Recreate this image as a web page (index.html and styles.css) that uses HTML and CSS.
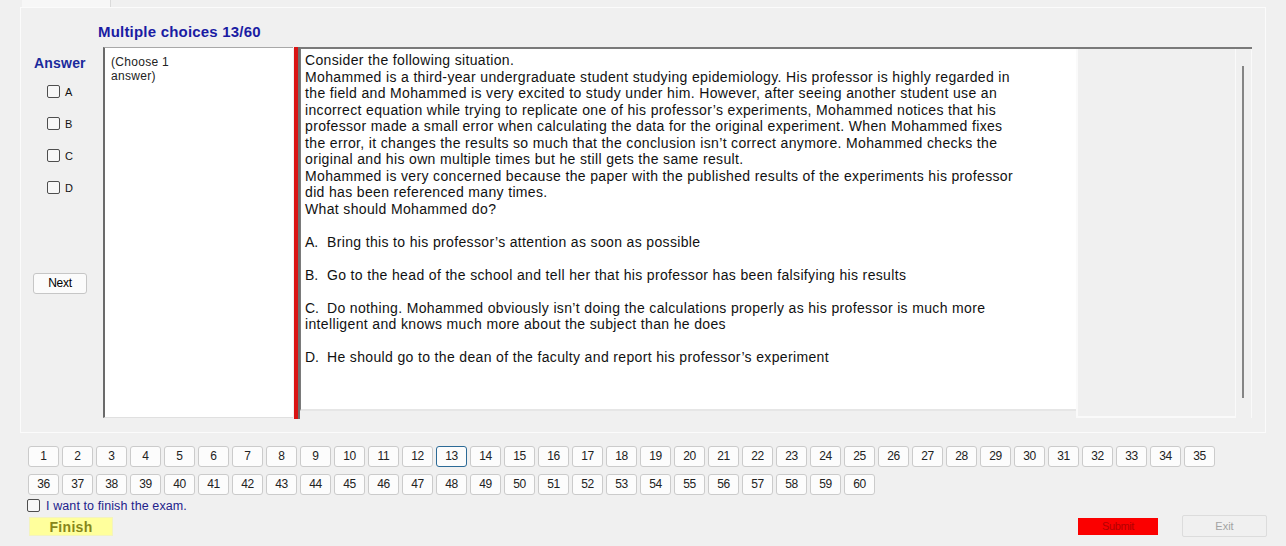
FILE: index.html
```html
<!DOCTYPE html>
<html>
<head>
<meta charset="utf-8">
<link rel="stylesheet" href="styles.css">
</head>
<body>
<div class="tabstrip"><div class="tab"></div></div>
<div class="panel">
  <div class="title">Multiple choices 13/60</div>
  <div class="work">
    <div class="leftcol">
      <div class="answer">Answer</div>
      <div class="opts">
        <div class="opt"><span class="cb"></span><span class="optl">A</span></div>
        <div class="opt"><span class="cb"></span><span class="optl">B</span></div>
        <div class="opt"><span class="cb"></span><span class="optl">C</span></div>
        <div class="opt"><span class="cb"></span><span class="optl">D</span></div>
      </div>
      <div class="next">Next</div>
    </div>
    <div class="choose">(Choose 1<br>answer)</div>
    <div class="redbar"></div>
    <div class="main">
      <div class="qbox">
        <p>Consider the following situation.<br>
Mohammed is a third-year undergraduate student studying epidemiology. His professor is highly regarded in<br>
the field and Mohammed is very excited to study under him. However, after seeing another student use an<br>
incorrect equation while trying to replicate one of his professor’s experiments, Mohammed notices that his<br>
professor made a small error when calculating the data for the original experiment. When Mohammed fixes<br>
the error, it changes the results so much that the conclusion isn’t correct anymore. Mohammed checks the<br>
original and his own multiple times but he still gets the same result.<br>
Mohammed is very concerned because the paper with the published results of the experiments his professor<br>
did has been referenced many times.<br>
What should Mohammed do?</p>
        <p><span class="ol">A.</span>Bring this to his professor’s attention as soon as possible</p>
        <p><span class="ol">B.</span>Go to the head of the school and tell her that his professor has been falsifying his results</p>
        <p><span class="ol">C.</span>Do nothing. Mohammed obviously isn’t doing the calculations properly as his professor is much more<br>intelligent and knows much more about the subject than he does</p>
        <p><span class="ol">D.</span>He should go to the dean of the faculty and report his professor’s experiment</p>
      </div>
      <div class="side">
        <div class="sideinner"></div>
        <div class="sbar"><div class="sline"></div></div>
      </div>
    </div>
  </div>
</div>
<div class="nums">
  <div class="numrow">
    <span class="nb">1</span><span class="nb">2</span><span class="nb">3</span><span class="nb">4</span><span class="nb">5</span><span class="nb">6</span><span class="nb">7</span><span class="nb">8</span><span class="nb">9</span><span class="nb">10</span><span class="nb">11</span><span class="nb">12</span><span class="nb cur">13</span><span class="nb">14</span><span class="nb">15</span><span class="nb">16</span><span class="nb">17</span><span class="nb">18</span><span class="nb">19</span><span class="nb">20</span><span class="nb">21</span><span class="nb">22</span><span class="nb">23</span><span class="nb">24</span><span class="nb">25</span><span class="nb">26</span><span class="nb">27</span><span class="nb">28</span><span class="nb">29</span><span class="nb">30</span><span class="nb">31</span><span class="nb">32</span><span class="nb">33</span><span class="nb">34</span><span class="nb">35</span>
  </div>
  <div class="numrow">
    <span class="nb">36</span><span class="nb">37</span><span class="nb">38</span><span class="nb">39</span><span class="nb">40</span><span class="nb">41</span><span class="nb">42</span><span class="nb">43</span><span class="nb">44</span><span class="nb">45</span><span class="nb">46</span><span class="nb">47</span><span class="nb">48</span><span class="nb">49</span><span class="nb">50</span><span class="nb">51</span><span class="nb">52</span><span class="nb">53</span><span class="nb">54</span><span class="nb">55</span><span class="nb">56</span><span class="nb">57</span><span class="nb">58</span><span class="nb">59</span><span class="nb">60</span>
  </div>
</div>
<div class="finishcheck"><span class="cb"></span><span class="fct">I want to finish the exam.</span></div>
<div class="actions">
  <div class="finish">Finish</div>
  <div class="right">
    <div class="submit">Submit</div>
    <div class="exit">Exit</div>
  </div>
</div>
</body>
</html>
```

FILE: styles.css
```css
* { box-sizing: border-box; }
html, body { margin: 0; padding: 0; }
body {
  background: #f0f0f0;
  font-family: "Liberation Sans", Arial, sans-serif;
  width: 1286px;
  height: 546px;
  overflow: hidden;
  color: #000;
}
.tabstrip { height: 7px; padding-left: 22px; }
.tab { width: 89px; height: 7px; background: #f7f7f7; border-right: 1px solid #dadada; }
.panel {
  margin-left: 20px;
  width: 1246px;
  height: 426px;
  border: 1px solid #fbfbfb;
  background: #f0f0f0;
}
.title {
  padding-left: 77px;
  margin-top: 15px;
  height: 18px;
  line-height: 18px;
  font-size: 15px;
  letter-spacing: 0.2px;
  font-weight: bold;
  color: #1a1ca3;
}
.work { display: flex; margin-top: 6px; height: 371px; }
.leftcol { width: 82px; display: flex; flex-direction: column; padding-left: 13px; padding-top: 8px; }
.answer { font-size: 14px; letter-spacing: 0.2px; font-weight: bold; color: #1a2a9c; line-height: 16px; height: 16px; }
.opts { margin-top: 14px; padding-left: 13px; display: flex; flex-direction: column; gap: 19px; }
.opt { display: flex; align-items: center; height: 13px; }
.cb {
  display: inline-block;
  width: 13px; height: 13px;
  border: 1px solid #4e4e4e;
  border-radius: 2px;
  background: #f7f7f7;
}
.optl { font-size: 11px; margin-left: 5px; color: #111; }
.next {
  margin-top: 79px;
  margin-left: -1px;
  width: 54px; height: 21px;
  border: 1px solid #c6c6c6;
  border-radius: 3px;
  background: #fbfbfb;
  font-size: 12px;
  line-height: 19px;
  text-align: center;
  letter-spacing: -0.3px;
}
.choose {
  width: 190px;
  height: 371px;
  background: #fff;
  border-left: 2px solid #6a6a6a;
  border-top: 1px solid #a8a8a8;
  border-bottom: 1px solid #e0e0e0;
  padding: 7px 6px;
  font-size: 12px;
  letter-spacing: 0.3px;
  line-height: 14px;
  color: #222;
}
.redbar {
  margin-left: 1px;
  width: 6px;
  height: 372px;
  background: #d91414;
  border-right: 2px solid #6f6f6f;
}
.main {
  width: 952px;
  height: 371px;
  border-top: 2px solid #7a7a7a;
  display: flex;
}
.qbox {
  width: 776px;
  height: 362px;
  background: #fff;
  border-left: 1px solid #7a7a7a;
  border-bottom: 2px solid #e6e6e6;
  padding: 3px 4px;
  font-size: 14px;
  letter-spacing: 0.35px;
  line-height: 16.5px;
  white-space: nowrap;
  color: #111;
}
.qbox p { margin: 0 0 16.5px 0; }
.ol { display: inline-block; width: 22px; letter-spacing: 0; }
.side { flex: 1; display: flex; }
.sideinner {
  width: 160px;
  height: 369px;
  border-left: 2px solid #fafafa;
  border-right: 1px solid #fafafa;
  border-bottom: 2px solid #fafafa;
}
.sbar { flex: 1; position: relative; border-right: 1px solid #fafafa; }
.sline { position: absolute; left: 6px; top: 17px; width: 2px; height: 332px; background: #858585; }
.nums { margin-top: 13px; padding-left: 28px; display: flex; flex-direction: column; gap: 7px; }
.numrow { display: flex; gap: 3px; }
.nb {
  display: inline-block;
  width: 31px;
  height: 21px;
  border: 1px solid #cbcbcb;
  border-radius: 3px;
  background: #fcfcfc;
  font-size: 12px;
  line-height: 19px;
  text-align: center;
  color: #222;
  letter-spacing: -0.3px;
}
.nb.cur { border-color: #2c6a96; }
.finishcheck { display: flex; align-items: center; padding-left: 27px; margin-top: 3px; height: 15px; }
.fct { margin-left: 6px; font-size: 12.5px; letter-spacing: 0.1px; color: #22228c; }
.actions { display: flex; justify-content: space-between; align-items: center; margin-top: 2px; padding-left: 29px; padding-right: 19px; }
.finish {
  width: 84px; height: 19px;
  background: #ffff9c;
  color: #86861a;
  font-weight: bold;
  font-size: 14px;
  letter-spacing: 0.3px;
  line-height: 19px;
  text-align: center;
  border: 1px solid #f3f3c0;
}
.right { display: flex; align-items: center; gap: 24px; }
.submit {
  width: 80px; height: 17px;
  background: #fb0000;
  color: #b40000;
  font-size: 11px;
  line-height: 17px;
  text-align: center;
  letter-spacing: -0.4px;
}
.exit {
  width: 85px; height: 22px;
  border: 1px solid #dcdcdc;
  border-radius: 2px;
  background: #f0f0f0;
  color: #a3a3a3;
  font-size: 11px;
  line-height: 20px;
  text-align: center;
}
```
